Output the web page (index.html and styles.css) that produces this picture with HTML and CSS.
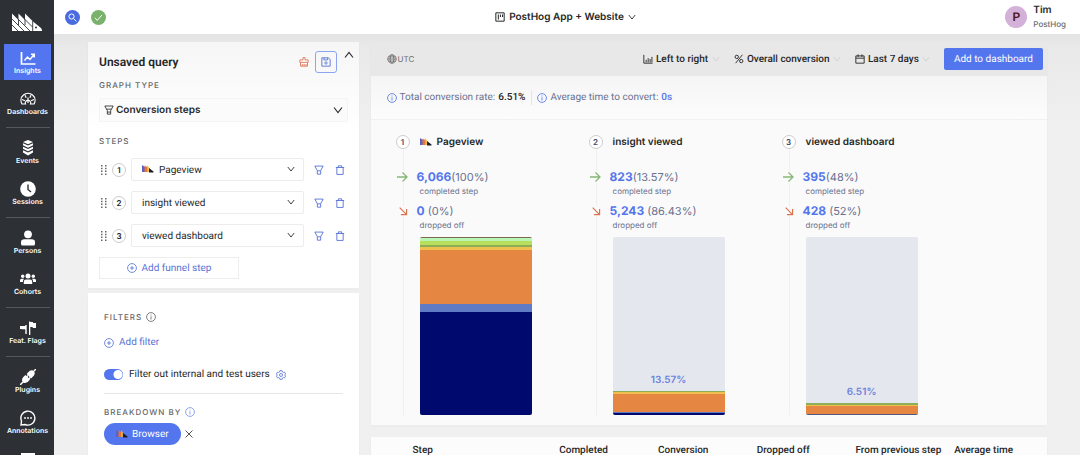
FILE: index.html
```html
<!DOCTYPE html>
<html lang="en">
<head>
<meta charset="utf-8">
<meta name="viewport" content="width=device-width, initial-scale=1">
<title>Insights - PostHog</title>
<link rel="stylesheet" href="styles.css">
</head>
<body>
<svg class="sprite" aria-hidden="true">
  <symbol id="hog" viewBox="0 0 30 18">
    <path d="M0 .5l6.500 6.500V.5L13 7V.5l8 8 8 6.500q1 1 1 3H0z"/>
    <path d="M-.5 5.500L12 18M-.5 11.500L6 18M6.500 6.500L18 18M13 6.500l7.500 7.500M6.500 12v-6M13 12V6M20.700 8v10" fill="none" stroke="#2d3136" stroke-width=".9"/>
    <circle cx="24" cy="14.500" r="1" fill="#2d3136"/>
  </symbol>
  <symbol id="hog-color" viewBox="0 0 12 8">
    <path fill="#5a62c4" d="M0 0l3 2v5H0z"/><path fill="#e8743b" d="M2.500 .5l3.500 2V7H2.500z"/><path fill="#f0b429" d="M5 0l2.500 3v4H5z" opacity=".8"/><path fill="#1d1f27" d="M7 3l4.500 3.500V7.500H7z"/>
  </symbol>
  <symbol id="info" viewBox="0 0 12 12"><g fill="none" stroke="currentColor"><circle cx="6" cy="6" r="5.300"/><path d="M6 5.200V9M6 3v1.200"/></g></symbol>
  <symbol id="plus" viewBox="0 0 12 12"><g fill="none" stroke="currentColor"><circle cx="6" cy="6" r="5.300"/><path d="M6 3.500v5M3.500 6h5"/></g></symbol>
  <symbol id="chevron" viewBox="0 0 10 10"><path fill="none" stroke="currentColor" stroke-width="1.100" d="M1 2.500l4 5 4-5"/></symbol>
  <symbol id="funnel" viewBox="0 0 12 12"><path fill="none" stroke="currentColor" d="M1 1.200h10L9 5H3zM3 5l1 1.500V11h4V6.500L9 5M4 8.500h4"/></symbol>
  <symbol id="filter" viewBox="0 0 12 12"><path fill="none" stroke="currentColor" stroke-width="1.100" d="M1 1.300h10L8 6.800V11H4V6.800zM4 7h4"/></symbol>
  <symbol id="trash" viewBox="0 0 12 12"><path fill="none" stroke="currentColor" stroke-width="1.100" d="M1 3h10M2.200 3v8.300h7.600V3M4 3V1h4v2"/></symbol>
  <symbol id="grip" viewBox="0 0 6 10"><path fill="currentColor" d="M0 0h1.500v1.500H0zM4 0h1.500v1.500H4zM0 2.800h1.500v1.500H0zM4 2.800h1.500v1.500H4zM0 5.600h1.500v1.500H0zM4 5.600h1.500v1.500H4zM0 8.400h1.500v1.500H0zM4 8.400h1.500v1.500H4z"/></symbol>
  <symbol id="arrow-right" viewBox="0 0 12 12"><path fill="none" stroke="currentColor" stroke-width="1.300" d="M1 6h10M6.500 1.500L11 6l-4.500 4.500"/></symbol>
  <symbol id="arrow-down" viewBox="0 0 12 12"><path fill="none" stroke="currentColor" stroke-width="1.400" d="M2 2l8 8M10.300 3.500v6.800H3.500"/></symbol>
</svg>

<div class="app">
  <nav class="sidebar" aria-label="Main">
    <a class="brand" href="#" aria-label="PostHog home"><svg><use href="#hog"/></svg></a>
    <a class="nav-item active" href="#">
      <svg viewBox="0 0 16 16"><path d="M1.500 2v12h14" fill="none" stroke="currentColor" stroke-width="1.700"/><path d="M4.500 10.500l3-3.500 2.500 2.500L14 4.500M11 4.300h3.300V7.500" fill="none" stroke="currentColor" stroke-width="1.400"/></svg>
      Insights</a>
    <a class="nav-item" href="#">
      <svg viewBox="0 0 16 16"><g fill="none" stroke="currentColor" stroke-width="1.200"><path d="M2 13a7 7 0 1 1 12 0h-3.500a2.700 2.700 0 1 0-5 0z"/><path d="M8 12V6.500M2 8.500l3 1.300M14 8.500l-3 1.300M5 4.200l1.200 2.500M11 4.200L9.800 6.700"/></g></svg>
      Dashboards</a>
    <hr>
    <a class="nav-item" href="#">
      <svg viewBox="0 0 16 16" fill="currentColor"><path d="M8 0l5 2-5 2.300L3 2zM3 3.200l5 2.300 5-2.300v2L8 7.800 3 5.200zM3 6.700L8 9l5-2.300v2l-5 2.600-5-2.600zM3 10.200l5 2.300 5-2.300v2.200L8 15.500l-5-3.100z"/></svg>
      Events</a>
    <a class="nav-item" href="#">
      <svg viewBox="0 0 16 16"><circle cx="8" cy="8" r="7.800" fill="currentColor"/><path d="M8 3.500V8.500l3 2.500" fill="none" stroke="#2d3136" stroke-width="1.400"/></svg>
      Sessions</a>
    <hr>
    <a class="nav-item" href="#">
      <svg viewBox="0 0 16 16" fill="currentColor"><circle cx="8" cy="4.300" r="3.900"/><path d="M1 14v-2Q1 9.300 4.500 9.300h7Q15 9.300 15 12v2q0 1.500-1.500 1.500h-11Q1 15.500 1 14z"/></svg>
      Persons</a>
    <a class="nav-item" href="#">
      <svg viewBox="0 0 16 16" fill="currentColor"><circle cx="8" cy="5" r="2.500"/><circle cx="2.700" cy="5.200" r="1.700"/><circle cx="13.300" cy="5.200" r="1.700"/><path d="M3.800 13v-2.300q0-2.200 2.200-2.200h4q2.200 0 2.200 2.200V13zM0 11V9.300q0-1.500 1.500-1.500H4Q2.800 9 2.900 11zM16 11V9.300q0-1.500-1.500-1.500H12q1.200 1.200 1.100 3.200z"/></svg>
      Cohorts</a>
    <hr>
    <a class="nav-item" href="#">
      <svg viewBox="0 0 16 16" fill="currentColor"><path d="M5.300 5h1.400v9H5.300V9.300H3L0 9V6h5.300zM9 1.500h1.300V15H9zM10.300 2h2.500l.5 1H16v5h-3l-.6-1h-2.100z"/></svg>
      Feat. Flags</a>
    <hr>
    <a class="nav-item" href="#">
      <svg viewBox="0 0 16 16"><g fill="currentColor"><path d="M8 3.500Q11 0 14 2q2 3-1.500 6L11 9.500 6.700 5z"/><path d="M5.500 6L10 10.500Q6.500 15.500 3 13.500 0 10 5.500 6z"/></g><path d="M14 2l2-2M0 16l3-3M6.500 8l1.500-1.500M8.500 10L10 8.500" stroke="currentColor" stroke-width="1.500"/></svg>
      Plugins</a>
    <a class="nav-item" href="#">
      <svg viewBox="0 0 16 16"><path d="M1 15l.5-4A7 7 0 1 1 5 14.500z" fill="none" stroke="currentColor" stroke-width="1.400"/><g fill="currentColor"><circle cx="5" cy="8" r=".9"/><circle cx="8" cy="8" r=".9"/><circle cx="11" cy="8" r=".9"/></g></svg>
      Annotations</a>
    <a class="nav-item next" href="#" aria-label="Project"><svg viewBox="0 0 16 16"><path fill="currentColor" d="M1 0h14v12H1z"/></svg></a>
  </nav>

  <div class="page">
    <header class="topbar">
      <div class="topbar-left">
        <button class="round search" aria-label="Search"><svg viewBox="0 0 14 14"><circle cx="5.500" cy="5.500" r="4"/><path d="M8.500 8.500l4.500 4.500"/></svg></button>
        <button class="round status" aria-label="System status"><svg viewBox="0 0 14 14"><path d="M1.500 7.500l3.500 4L12.500 3"/></svg></button>
      </div>
      <button class="project">
        <svg viewBox="0 0 12 12"><path fill="none" stroke="currentColor" stroke-width="1.200" d="M1 1h10v10H1zM4 3v6M6.500 3v3M9 3v3"/></svg>
        PostHog App + Website
        <svg class="small"><use href="#chevron"/></svg>
      </button>
      <button class="user">
        <span class="avatar">P</span>
        <span class="who"><strong>Tim</strong><span>PostHog</span></span>
      </button>
    </header>

    <main class="content">
      <div class="column">
        <section class="card query">
          <div class="query-head">
            <h1>Unsaved query</h1>
            <button class="icon-btn clear" aria-label="Clear"><svg viewBox="0 0 12 12"><path fill="none" stroke="currentColor" stroke-width="1.100" d="M4.800 3.500V.7h2.400v2.800H11v3H1v-3h3.800M1.800 6.500V11h8.400V6.500M4 11V8.500M6.200 11V8.500M8.400 11V8.500"/></svg></button>
            <button class="icon-btn save" aria-label="Save"><svg viewBox="0 0 12 12"><path fill="none" stroke="currentColor" stroke-width="1.100" d="M1 1h8l2 2v8H1zM3.500 1v2.500h4.500V1"/><circle cx="6" cy="7.200" r="1.400" fill="none" stroke="currentColor"/></svg></button>
            <button class="icon-btn collapse" aria-label="Collapse"><svg class="flip"><use href="#chevron"/></svg></button>
          </div>
          <h2><label for="graph">Graph type</label></h2>
          <div class="select graph-select">
            <svg class="lead"><use href="#funnel"/></svg>
            <select id="graph"><option>Conversion steps</option></select>
            <svg class="caret"><use href="#chevron"/></svg>
          </div>
          <h2>Steps</h2>
          <ol class="step-list">
            <li>
              <svg class="grip"><use href="#grip"/></svg><span class="num">1</span>
              <div class="select with-logo"><svg class="lead"><use href="#hog-color"/></svg><select aria-label="Step 1"><option>Pageview</option></select><svg class="caret"><use href="#chevron"/></svg></div>
              <button class="icon-btn" aria-label="Filter step 1"><svg><use href="#filter"/></svg></button>
              <button class="icon-btn" aria-label="Delete step 1"><svg><use href="#trash"/></svg></button>
            </li>
            <li>
              <svg class="grip"><use href="#grip"/></svg><span class="num">2</span>
              <div class="select"><select aria-label="Step 2"><option>insight viewed</option></select><svg class="caret"><use href="#chevron"/></svg></div>
              <button class="icon-btn" aria-label="Filter step 2"><svg><use href="#filter"/></svg></button>
              <button class="icon-btn" aria-label="Delete step 2"><svg><use href="#trash"/></svg></button>
            </li>
            <li>
              <svg class="grip"><use href="#grip"/></svg><span class="num">3</span>
              <div class="select"><select aria-label="Step 3"><option>viewed dashboard</option></select><svg class="caret"><use href="#chevron"/></svg></div>
              <button class="icon-btn" aria-label="Filter step 3"><svg><use href="#filter"/></svg></button>
              <button class="icon-btn" aria-label="Delete step 3"><svg><use href="#trash"/></svg></button>
            </li>
          </ol>
          <button class="add-step"><svg><use href="#plus"/></svg>Add funnel step</button>
        </section>

        <section class="card filters">
          <h2>Filters <svg><use href="#info"/></svg></h2>
          <button class="add-filter"><svg><use href="#plus"/></svg>Add filter</button>
          <div class="toggle-row">
            <input type="checkbox" id="internal" class="toggle" checked>
            <label for="internal">Filter out internal and test users</label>
            <button class="icon-btn" aria-label="Settings"><svg viewBox="0 0 12 12"><path fill="none" stroke="currentColor" d="M4.700.8h2.600l.4 1.500 1 .6 1.500-.4 1.300 2.200L10.400 6l1.100 1.300-1.300 2.200-1.500-.4-1 .6-.4 1.500H4.700l-.4-1.500-1-.6-1.500.4L.5 7.300 1.600 6 .5 4.700l1.300-2.200 1.500.4 1-.6z"/><circle cx="6" cy="6" r="1.800" fill="none" stroke="currentColor"/></svg></button>
          </div>
          <hr>
          <h2>Breakdown by <svg class="blue"><use href="#info"/></svg></h2>
          <div class="breakdown">
            <button class="pill"><svg><use href="#hog-color"/></svg>Browser</button>
            <button class="icon-btn close" aria-label="Remove breakdown"><svg viewBox="0 0 10 10"><path stroke="currentColor" d="M1.500 1.500l7 7M8.500 1.500l-7 7"/></svg></button>
          </div>
        </section>
      </div>

      <div class="column">
        <section class="card results">
          <div class="toolbar">
            <span class="tz"><svg viewBox="0 0 12 12"><g fill="none" stroke="currentColor"><circle cx="6" cy="6" r="5"/><ellipse cx="6" cy="6" rx="2.300" ry="5"/><path d="M1 6h10M1.700 3.500h8.600M1.700 8.500h8.600"/></g></svg>UTC</span>
            <label class="pick"><svg viewBox="0 0 12 12"><path fill="none" stroke="currentColor" stroke-width="1.100" d="M1 1v10h10.500M3.800 10V7M6.200 10V5M8.500 10V6M10.700 10V3.500"/></svg><select aria-label="Layout"><option>Left to right</option></select><svg class="pale"><use href="#chevron"/></svg></label>
            <label class="pick"><svg viewBox="0 0 12 12"><g fill="none" stroke="currentColor" stroke-width="1.100"><circle cx="3.300" cy="3.500" r="2"/><circle cx="8.700" cy="8.500" r="2"/><path d="M10 1L2 11"/></g></svg><select aria-label="Conversion"><option>Overall conversion</option></select><svg class="pale"><use href="#chevron"/></svg></label>
            <label class="pick"><svg viewBox="0 0 12 12"><path fill="none" stroke="currentColor" stroke-width="1.100" d="M1 2.300h10V11H1zM1 5h10M3.700.5v3M8.300.5v3"/></svg><select aria-label="Date range"><option>Last 7 days</option></select><svg class="pale"><use href="#chevron"/></svg></label>
            <button class="primary">Add to dashboard</button>
          </div>
          <div class="summary">
            <span><svg><use href="#info"/></svg>Total conversion rate: <b>6.51%</b></span>
            <span><svg><use href="#info"/></svg>Average time to convert: <a href="#">0s</a></span>
          </div>
          <div class="funnel">
            <article class="step">
              <h3><span class="num">1</span><svg><use href="#hog-color"/></svg>Pageview</h3>
              <div class="metric"><svg class="ok"><use href="#arrow-right"/></svg><p><b>6,066</b>(100%)</p><small>completed step</small></div>
              <div class="metric"><svg class="lost"><use href="#arrow-down"/></svg><p><b>0</b> (0%)</p><small>dropped off</small></div>
              <div class="bar">
                <i class="maroon" style="height:.6%"></i><i class="mint" style="height:1.700%"></i><i class="lime" style="height:2.200%"></i><i class="olive" style="height:1%"></i><i class="gold" style="height:2%"></i><i class="orange" style="height:30%"></i><i class="blue-bar" style="height:4.500%"></i><i class="navy" style="height:58%"></i>
              </div>
            </article>
            <article class="step">
              <h3><span class="num">2</span>insight viewed</h3>
              <div class="metric"><svg class="ok"><use href="#arrow-right"/></svg><p><b>823</b>(13.57%)</p><small>completed step</small></div>
              <div class="metric"><svg class="lost"><use href="#arrow-down"/></svg><p><b>5,243</b> (86.43%)</p><small>dropped off</small></div>
              <div class="bar">
                <span class="rate">13.57%</span>
                <i class="olive" style="height:.7%"></i><i class="gold" style="height:.7%"></i><i class="orange" style="height:10.200%"></i><i class="blue-bar" style="height:1%"></i><i class="navy" style="height:.9%"></i>
              </div>
            </article>
            <article class="step">
              <h3><span class="num">3</span>viewed dashboard</h3>
              <div class="metric"><svg class="ok"><use href="#arrow-right"/></svg><p><b>395</b>(48%)</p><small>completed step</small></div>
              <div class="metric"><svg class="lost"><use href="#arrow-down"/></svg><p><b>428</b> (52%)</p><small>dropped off</small></div>
              <div class="bar">
                <span class="rate">6.51%</span>
                <i class="olive" style="height:.6%"></i><i class="gold" style="height:.6%"></i><i class="orange" style="height:4.600%"></i><i class="slate" style="height:.7%"></i>
              </div>
            </article>
          </div>
        </section>

        <section class="card table-card">
          <table>
            <thead><tr><th>Step</th><th>Completed</th><th>Conversion</th><th>Dropped off</th><th>From previous step</th><th>Average time</th></tr></thead>
          </table>
        </section>
      </div>
    </main>
  </div>
</div>
</body>
</html>
```

FILE: styles.css
```css
:root {
  --blue: #5375ee;
  --link: #5873d6;
  --slate: #69708f;
  --ink: #262728;
  --muted: #6b6b6b;
  --wide: Inter, "Liberation Sans", sans-serif;
}
* { box-sizing: border-box; }
body {
  margin: 0;
  font: 10px/15px Roboto, "Liberation Sans", sans-serif;
  text-rendering: geometricPrecision;
  color: var(--ink);
  background: #f0f0f0;
}
h1, h2, h3, p, ol { margin: 0; padding: 0; font-weight: 400; }
button, select {
  font: inherit;
  text-rendering: inherit;
  color: inherit;
  border: 0;
  padding: 0;
  margin: 0;
  background: none;
}
select { appearance: none; }
a { color: inherit; text-decoration: none; }
svg { width: 10px; height: 10px; flex: none; display: block; }
.sprite { position: absolute; width: 0; height: 0; }

.app { display: flex; height: 100vh; overflow: hidden; }

/* Sidebar */
.sidebar {
  width: 54px;
  flex: none;
  display: flex;
  flex-direction: column;
  gap: 5px;
  padding: 0 3px 0 4px;
  background: #2d3136;
  color: #fff;
  overflow: hidden;
}
.brand { height: 39px; flex: none; padding: 13px 0 0 8px; }
.brand svg { width: 30px; height: 18px; fill: #fff; }
.nav-item {
  height: 36px;
  flex: none;
  display: flex;
  flex-direction: column;
  align-items: center;
  justify-content: center;
  font-family: var(--wide);
  font-size: 7px;
  line-height: 9px;
  font-weight: 600;
  white-space: nowrap;
}
.nav-item svg { width: 16px; height: 16px; }
.next { justify-content: flex-start; padding-top: 8px; }
.active { background: #5375f0; }
.sidebar hr {
  width: 44px;
  flex: none;
  margin: 1px auto;
  border: 0;
  border-top: 1px solid #55595e;
}

/* Top bar */
.page { flex: 1; min-width: 0; display: flex; flex-direction: column; }
.topbar {
  height: 34px;
  flex: none;
  display: grid;
  grid-template-columns: 1fr auto 1fr;
  align-items: center;
  padding: 0 14px 0 11px;
  background: #fff;
}
.topbar-left { display: flex; gap: 11px; }
.round {
  width: 15px;
  height: 15px;
  border-radius: 50%;
  display: grid;
  place-items: center;
}
.round svg { width: 9px; height: 9px; fill: none; stroke: #fff; stroke-width: 1.5; }
.search { background: #4a6be0; }
.status { background: #7ab26c; }
.project { display: flex; align-items: center; gap: 4px; font-family: var(--wide); font-weight: 600; }
.project .small { width: 8px; height: 8px; }
.user { justify-self: end; display: flex; align-items: center; gap: 6px; text-align: left; }
.avatar {
  width: 22px;
  height: 22px;
  border-radius: 50%;
  display: grid;
  place-items: center;
  background: #d3b1d8;
  color: #4d1420;
  font-size: 12px;
  font-weight: 600;
}
.who { display: grid; font-family: var(--wide); font-size: 8px; line-height: 14px; font-weight: 500; color: var(--muted); }
.who strong { font-size: 10px; font-weight: 600; color: var(--ink); }

/* Content */
.content {
  flex: 1;
  min-height: 0;
  display: grid;
  grid-template-columns: 2fr 5fr;
  gap: 12px;
  padding: 8px 33px 0 34px;
  background: linear-gradient(#e3e3e3, #e9e9e9 12px, #f0f0f0 90px);
}
.column { min-width: 0; display: flex; flex-direction: column; }
.card { flex: none; background: #fff; box-shadow: 0 1px 4px rgba(0, 0, 0, .03); }
h2 {
  display: flex;
  align-items: center;
  gap: 4px;
  font-family: var(--wide);
  font-size: 8px;
  line-height: 12px;
  font-weight: 500;
  text-transform: uppercase;
  letter-spacing: 1px;
  color: #666;
}

/* Query editor */
.query { padding: 8px 11px 9px; background: linear-gradient(#f6f6f6, #fff 90px); }
.query-head { display: flex; align-items: center; height: 24px; margin-bottom: 5px; }
h1 { flex: 1; font-size: 12px; line-height: 16px; font-weight: 600; }
.icon-btn { display: grid; place-items: center; color: var(--link); }
.clear { color: #e0795c; }
.save {
  width: 22px;
  height: 22px;
  margin: 0 7px 0 6px;
  border: 1px solid #8ea4f0;
  border-radius: 3px;
}
.collapse { align-self: start; color: var(--ink); margin-right: -6px; }
.flip { transform: rotate(180deg); }
.select { position: relative; display: flex; }
.select select {
  width: 100%;
  height: 23px;
  padding: 1px 24px 0 10px;
  border: 1px solid #ececec;
  border-radius: 2px;
  background: #fff;
}
.select svg { position: absolute; top: 7px; pointer-events: none; }
.select .lead { left: 5px; }
.select .caret { right: 9px; width: 8px; height: 8px; }
.graph-select { margin: 7px 0 13px; }
.graph-select select {
  height: 24px;
  padding: 0 24px 0 16px;
  font-family: var(--wide);
  font-weight: 600;
  border-color: #f4f4f4;
  background: #fbfbfb;
}
.graph-select .caret { right: 5px; width: 10px; height: 10px; }
.with-logo select { padding-left: 27px; }
.with-logo .lead { left: 11px; width: 12px; height: 8px; }
.step-list { display: grid; gap: 10px; margin: 11px 0 10px; list-style: none; }
.step-list li {
  display: grid;
  grid-template-columns: 6px 14px 1fr 20px 12px;
  align-items: center;
  column-gap: 5px;
  padding: 0 2px;
}
.grip { width: 6px; color: #666; }
.num {
  width: 14px;
  height: 14px;
  display: grid;
  place-items: center;
  border: 1px solid #ccc;
  border-radius: 50%;
  background: #fff;
  font-family: var(--wide);
  font-size: 8px;
  line-height: 12px;
  font-weight: 600;
}
.add-step, .add-filter {
  display: flex;
  align-items: center;
  justify-content: center;
  gap: 5px;
  color: var(--link);
}
.add-step { width: 140px; height: 22px; border: 1px solid #ededed; }

/* Filters */
.filters { flex: 1; margin-top: 5px; padding: 18px 16px; }
.add-filter { margin: 12px 0 17px; }
.toggle-row { display: flex; align-items: center; gap: 6px; height: 15px; }
.toggle {
  appearance: none;
  width: 19px;
  height: 11px;
  margin: 0;
  border-radius: 6px;
  background: radial-gradient(circle at 14px 50%, #fff 4px, var(--blue) 5px);
}
.filters hr { margin: 11px 0 12px; border: 0; border-top: 1px solid #e6e6e6; }
.blue { color: #7b92e8; }
.breakdown { display: flex; align-items: center; gap: 3px; margin-top: 5px; }
.pill {
  display: flex;
  align-items: center;
  gap: 4px;
  height: 22px;
  padding: 0 12px;
  border-radius: 11px;
  background: var(--blue);
  color: #fff;
}
.pill svg { width: 12px; height: 8px; }
.close { color: #555; }

/* Results */
.results { background: #fafafa; }
.toolbar {
  display: flex;
  align-items: center;
  gap: 14px;
  height: 34px;
  padding: 0 4px 0 16px;
  background: #e8e8e8;
}
.tz { display: flex; align-items: center; gap: 1px; margin-right: auto; font-family: var(--wide); font-size: 8px; color: var(--muted); }
.pick { display: flex; align-items: center; gap: 3px; font-weight: 500; }
.pale { width: 8px; height: 8px; color: #cfcfcf; }
.primary {
  height: 22px;
  padding: 0 10px;
  border-radius: 2px;
  background: var(--blue);
  color: #fff;
}
.summary {
  display: flex;
  align-items: center;
  height: 43px;
  padding: 0 16px;
  color: var(--slate);
  background: linear-gradient(#f5f5f5, #fcfcfc);
}
.summary span { display: flex; align-items: center; gap: 3px; }
.summary span + span { margin-left: 6px; padding-left: 5px; border-left: 1px solid #e4e4e4; }
.summary svg { color: var(--blue); }
.summary b { font-weight: 500; color: var(--ink); }
.summary a { color: var(--blue); font-weight: 500; }
.funnel {
  display: grid;
  grid-template-columns: repeat(3, 193px);
  padding: 13px 25px 10px;
  border-top: 1px solid #f1f1f1;
}
.step { position: relative; }
.step::before {
  content: "";
  position: absolute;
  top: 9px;
  bottom: 0;
  left: 7px;
  border-left: 1px solid #f0f0f0;
}
h3 {
  position: relative;
  display: flex;
  align-items: center;
  gap: 5px;
  height: 18px;
  margin-bottom: 17px;
  font-family: var(--wide);
  font-size: 10px;
  font-weight: 600;
}
h3 .num { margin-right: 5px; color: #44485f; }
h3 svg { width: 12px; height: 8px; }
.metric {
  position: relative;
  display: grid;
  grid-template-columns: 12px 1fr;
  column-gap: 9px;
  align-items: center;
  margin-bottom: 6px;
  font-family: var(--wide);
  color: var(--slate);
}
.metric svg { width: 12px; height: 12px; background: #fafafa; }
.metric .ok { color: #85b877; }
.metric .lost { height: 10px; color: #db7350; margin-left: 1px; }
.metric p { font-size: 11px; line-height: 18px; }
.metric b { font-size: 12px; font-weight: 700; color: var(--blue); }
.metric small { grid-column: 2; padding-left: 3px; font-size: 8px; line-height: 10px; }
.bar {
  width: 112px;
  height: 178px;
  margin: 7px 0 0 24px;
  display: flex;
  flex-direction: column;
  justify-content: flex-end;
  border-radius: 2px;
  background: #e5e7ee;
  overflow: hidden;
}
.bar i { flex: none; }
.rate { margin-bottom: 3px; text-align: center; font-family: var(--wide); font-weight: 600; color: #6c82dc; }
.maroon { background: #7c6a4f; }
.mint { background: #b9f5b4; }
.lime { background: #b7df5b; }
.olive { background: #8cae58; }
.gold { background: #f0c04e; }
.orange { background: #e58743; }
.blue-bar { background: #5f7bc6; }
.navy { background: #000a6e; }
.slate { background: #51587f; }

/* Breakdown table */
.table-card { flex: 1; margin-top: 12px; background: #fcfcfc; }
table { width: 100%; table-layout: fixed; border-collapse: collapse; }
th { padding: 6px 0 0 6px; text-align: left; font-weight: 500; white-space: nowrap; }
th:first-child { width: 27%; padding-left: 42px; }
```
